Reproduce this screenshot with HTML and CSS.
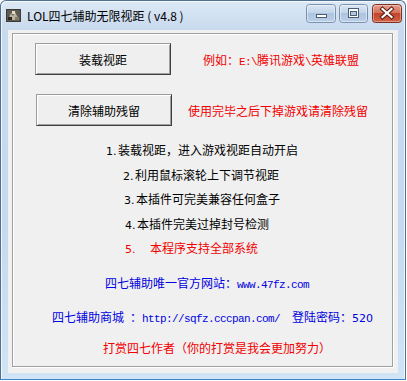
FILE: index.html
```html
<!DOCTYPE html>
<html lang="zh-CN">
<head>
<meta charset="utf-8">
<title>LOL四七辅助无限视距</title>
<link rel="stylesheet" href="styles.css">
</head>
<body>
<div class="window">
  <div class="titlebar">
    <svg class="app-icon" width="15" height="13" viewBox="0 0 15 13">
      <rect x="0" y="0" width="15" height="13" fill="#3b3a36"/>
      <rect x="1" y="1" width="13" height="11" fill="#5c5a52"/>
      <path d="M2 11 L5 4 L7 7 L9 3 L13 11 Z" fill="#b9b3a0"/>
      <rect x="6" y="2" width="3" height="3" fill="#e2ddcc"/>
      <rect x="2" y="8" width="4" height="3" fill="#2a2926"/>
      <rect x="9" y="8" width="4" height="3" fill="#807a6a"/>
    </svg>
    <span class="title">LOL四七辅助无限视距 ( v4.8 )</span>
    <div class="caption-buttons">
      <svg class="cbtn cbtn-min" width="30" height="19" viewBox="0 0 30 19">
        <defs>
          <linearGradient id="gBlue" x1="0" y1="0" x2="0" y2="1">
            <stop offset="0" stop-color="#dbe6f3"/>
            <stop offset="0.45" stop-color="#c3d5ea"/>
            <stop offset="0.5" stop-color="#adc3df"/>
            <stop offset="1" stop-color="#bcd0e8"/>
          </linearGradient>
          <linearGradient id="gRed" x1="0" y1="0" x2="0" y2="1">
            <stop offset="0" stop-color="#e6a08e"/>
            <stop offset="0.45" stop-color="#d5735c"/>
            <stop offset="0.5" stop-color="#c2452c"/>
            <stop offset="1" stop-color="#d26349"/>
          </linearGradient>
        </defs>
        <rect x="0.5" y="0.5" width="29" height="18" rx="3" fill="url(#gBlue)" stroke="#7a91ae"/>
        <rect x="1.5" y="1.5" width="27" height="16" rx="2" fill="none" stroke="#ffffff" stroke-opacity="0.45"/>
        <rect x="10.5" y="10.5" width="10" height="3" fill="#ffffff" stroke="#4a5d77"/>
      </svg>
      <svg class="cbtn cbtn-max" width="29" height="19" viewBox="0 0 29 19">
        <rect x="0.5" y="0.5" width="28" height="18" rx="3" fill="url(#gBlue)" stroke="#7a91ae"/>
        <rect x="1.5" y="1.5" width="26" height="16" rx="2" fill="none" stroke="#ffffff" stroke-opacity="0.45"/>
        <rect x="9.5" y="4.5" width="10" height="9" fill="#ffffff" stroke="#4a5d77"/>
        <rect x="11.5" y="7.5" width="6" height="4" fill="#b3c7e0" stroke="#4a5d77"/>
      </svg>
      <svg class="cbtn cbtn-close" width="30" height="19" viewBox="0 0 30 19">
        <rect x="0.5" y="0.5" width="29" height="18" rx="3" fill="url(#gRed)" stroke="#7d3022"/>
        <rect x="1.5" y="1.5" width="27" height="16" rx="2" fill="none" stroke="#ffffff" stroke-opacity="0.35"/>
        <path d="M10.5 5 L19.5 13 M19.5 5 L10.5 13" stroke="#5b1e14" stroke-width="4.2" stroke-linecap="square"/>
        <path d="M10.5 5 L19.5 13 M19.5 5 L10.5 13" stroke="#ffffff" stroke-width="2.2" stroke-linecap="square"/>
      </svg>
    </div>
  </div>
  <div class="client">
    <div class="panel">
      <div class="row row-load">
        <button class="btn">装载视距</button>
        <span class="red note-load">例如：<span class="mono">E:\</span>腾讯游戏<span class="mono">\</span>英雄联盟</span>
      </div>
      <div class="row row-clear">
        <button class="btn">清除辅助残留</button>
        <span class="red note-clear">使用完毕之后下掉游戏请清除残留</span>
      </div>
      <ul class="steps">
        <li class="step s1"><span class="num">1.</span>装载视距，进入游戏视距自动开启</li>
        <li class="step s2"><span class="num">2.</span>利用鼠标滚轮上下调节视距</li>
        <li class="step s3"><span class="num">3.</span>本插件可完美兼容任何盒子</li>
        <li class="step s4"><span class="num">4.</span>本插件完美过掉封号检测</li>
        <li class="step s5 red"><span class="num num-wide">5.</span>本程序支持全部系统</li>
      </ul>
      <p class="info blue web">四七辅助唯一官方网站：<span class="mono">www.47fz.com</span></p>
      <p class="info blue shop">四七辅助商城<span class="gap6"></span>：<span class="mono">http://sqfz.cccpan.com/</span><span class="gap12"></span>登陆密码：<span class="digits">520</span></p>
      <p class="info red reward">打赏四七作者（你的打赏是我会更加努力）</p>
    </div>
  </div>
</div>
</body>
</html>
```
FILE: styles.css
```css
body {
  margin: 0;
  background: #ffffff;
  font-family: "Noto Sans CJK SC", "Noto Sans", sans-serif;
  font-size: 12px;
  color: #000;
}

.window {
  width: 406px;
  height: 380px;
  box-sizing: border-box;
  border: 1px solid #52708f;
  border-bottom-color: #3a86cf;
  border-radius: 6px 6px 0 0;
  background: linear-gradient(to bottom, #dce8f5 0, #c9daee 28px, #c6d9ee 60%, #d0e4f5 100%);
  box-shadow: inset 1px 1px 0 rgba(255,255,255,0.7), inset -1px 0 0 rgba(255,255,255,0.7);
  padding: 0 7px 6px 7px;
  display: flex;
  flex-direction: column;
}

.titlebar {
  height: 29px;
  margin: 0 -7px;
  padding: 0 3px 0 5px;
  display: flex;
  align-items: center;
}

.app-icon {
  flex: none;
  margin-right: 6px;
}

.title {
  flex: 1;
  font-size: 12px;
  color: #000;
  white-space: nowrap;
}

.caption-buttons {
  align-self: flex-start;
  margin-top: 3px;
  display: flex;
}

.cbtn {
  flex: none;
  display: block;
}

.cbtn-min { margin-right: 3px; }
.cbtn-max { margin-right: 4px; }

.client {
  flex: 1;
  background: #f0f0f0;
  display: flex;
  flex-direction: column;
}

.panel {
  flex: 1;
  margin: 3px 5px 6px 4px;
  border: 1px solid #a0a0a0;
  box-shadow: 1px 1px 0 #ffffff, inset 1px 1px 0 #ffffff;
  padding-top: 9px;
}

.row {
  display: flex;
  align-items: center;
}

.row-load { padding-left: 22px; }
.row-clear { padding-left: 23px; margin-top: 19px; }

.btn {
  width: 136px;
  height: 32px;
  box-sizing: border-box;
  padding: 0;
  margin: 0;
  border: 1px solid;
  border-color: #9c9c9c #3f3f3f #3f3f3f #9c9c9c;
  background: #efefef;
  box-shadow: inset 1px 1px 0 #ffffff, inset -1px -1px 0 #a0a0a0;
  font-family: "Noto Sans CJK SC", sans-serif;
  font-size: 12px;
  color: #000;
}

.note-load { margin-left: 32px; }
.note-clear { margin-left: 16px; }

.red { color: #f00000; }
.blue { color: #0000e0; }

.mono {
  font-family: "Liberation Mono", "DejaVu Sans Mono", monospace;
  font-size: 11px;
  letter-spacing: -0.6px;
}

.steps {
  list-style: none;
  margin: 12px 0 0;
  padding: 0;
}

.step {
  height: 24.5px;
  line-height: 24.5px;
  white-space: nowrap;
}

.s1 { padding-left: 93px; }
.s2 { padding-left: 110px; }
.s3 { padding-left: 111px; }
.s4 { padding-left: 112px; }
.s5 { padding-left: 112px; }

.num {
  display: inline-block;
  width: 12px;
  font-family: "DejaVu Sans", sans-serif;
  font-size: 11px;
}

.num-wide { width: 25px; }

.info {
  margin: 9px 0 0;
  height: 25px;
  line-height: 25px;
  white-space: nowrap;
}

.web { padding-left: 92px; }
.shop { padding-left: 39px; }
.reward { padding-left: 90px; margin-top: 6px; }

.gap6 { display: inline-block; width: 6px; }
.gap12 { display: inline-block; width: 12px; }

.digits {
  font-family: "DejaVu Sans", sans-serif;
  font-size: 11px;
}
```
